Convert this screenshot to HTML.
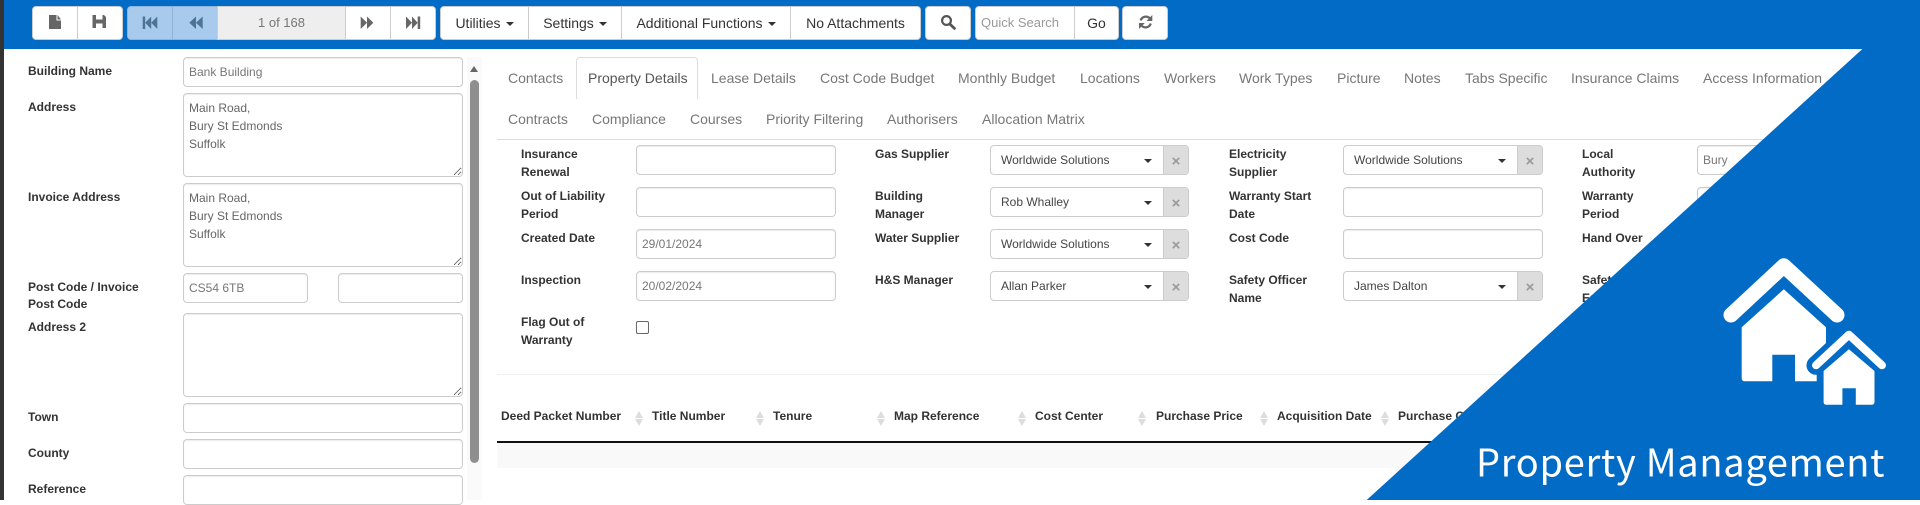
<!DOCTYPE html>
<html lang="en"><head><meta charset="utf-8"><title>Property Management</title>
<style>
html,body{margin:0;padding:0;width:1920px;height:500px;overflow:hidden;background:#fff;font-family:"Liberation Sans",Arial,sans-serif;font-size:12px;color:#333}
*{box-sizing:border-box}
.a,.l,.t,.i,.s,.h,.b,textarea{position:absolute}
.l{left:0;font-weight:bold;line-height:18px;white-space:nowrap;color:#333}
.t{font-size:14px;line-height:20px;color:#777;white-space:nowrap}
.i,textarea{background:#fff;border:1px solid #ccc;border-radius:4px;box-shadow:inset 0 1px 1px rgba(0,0,0,.075);padding:0 5px;color:#777;font:12px/28px "Liberation Sans",Arial,sans-serif}
textarea{padding:5px;line-height:18px;color:#666;margin:0;resize:both;overflow:hidden;outline:0}
.s{height:30px;background:#fff;border:1px solid #ccc;border-radius:4px;line-height:28px;color:#444;padding-left:10px;white-space:nowrap;font-size:12px}
.s u{position:absolute;right:0;top:0;bottom:0;width:25px;background:#ddd;border-left:1px solid #ccc;border-radius:0 3px 3px 0}
.s u:after{content:"\00d7";position:absolute;left:0;right:0;top:0;text-align:center;font-weight:bold;font-size:15px;color:#999;text-decoration:none;line-height:31px}
.s i{position:absolute;right:36px;top:13px;border:4px solid transparent;border-top-color:#333;border-bottom:0}
.b{top:6px;height:34px;background:#fff;border:1px solid #ccc;font-size:14px;line-height:32px;text-align:center;color:#333;white-space:nowrap}
.h{top:407px;font-weight:bold;line-height:18px;white-space:nowrap;color:#333}
.c{display:inline-block;width:0;height:0;border:4px solid transparent;border-top-color:#333;border-bottom:0;vertical-align:middle;margin-left:5px}
</style></head><body>
<div class="a" style="left:0;top:0;width:1920px;height:49px;background:#016bc6"></div>
<div class="a" style="left:0;top:0;width:4px;height:500px;background:#333"></div>

<!-- toolbar -->
<div class="b" style="left:32px;width:46px;border-radius:4px 0 0 4px"></div>
<div class="b" style="left:77px;width:46px;border-radius:0 4px 4px 0"></div>
<div class="b" style="left:127px;width:46px;border-radius:4px 0 0 4px;background:#a8cbed;border-color:#8fb4d8"></div>
<div class="b" style="left:172px;width:46px;background:#a8cbed;border-color:#8fb4d8"></div>
<div class="b" style="left:217px;width:129px;background:#eee;color:#777;font-size:13px">1 of 168</div>
<div class="b" style="left:345px;width:46px"></div>
<div class="b" style="left:390px;width:46px;border-radius:0 4px 4px 0"></div>
<div class="b" style="left:440px;width:89px;border-radius:4px 0 0 4px">Utilities<span class="c"></span></div>
<div class="b" style="left:528px;width:94px">Settings<span class="c"></span></div>
<div class="b" style="left:621px;width:170px">Additional Functions<span class="c"></span></div>
<div class="b" style="left:790px;width:131px;border-radius:0 4px 4px 0">No Attachments</div>
<div class="b" style="left:925px;width:46px;border-radius:4px"></div>
<div class="b" style="left:975px;width:100px;border-radius:4px 0 0 4px;color:#999;font-size:13px;text-align:left;padding-left:5px">Quick Search</div>
<div class="b" style="left:1074px;width:45px;border-radius:0 4px 4px 0">Go</div>
<div class="b" style="left:1122px;width:46px;border-radius:4px"></div>

<!-- left panel -->
<div class="a" style="left:467px;top:57px;width:15px;height:443px;background:#fafafa"></div>
<div class="a" style="left:470px;top:80px;width:9px;height:383px;background:#8f8f8f;border-radius:5px"></div>
<div class="a" style="left:470px;top:66px;border:4.5px solid transparent;border-bottom:6px solid #666;border-top:0"></div>
<div class="l" style="left:28px;top:62px">Building Name</div>
<div class="i" style="left:183px;top:57px;width:280px;height:30px">Bank Building</div>
<div class="l" style="left:28px;top:98px">Address</div>
<textarea style="left:183px;top:93px;width:280px;height:84px">Main Road,
Bury St Edmonds
Suffolk</textarea>
<div class="l" style="left:28px;top:188px">Invoice Address</div>
<textarea style="left:183px;top:183px;width:280px;height:84px">Main Road,
Bury St Edmonds
Suffolk</textarea>
<div class="l" style="left:28px;top:279px;line-height:17px">Post Code / Invoice<br>Post Code</div>
<div class="i" style="left:183px;top:273px;width:125px;height:30px">CS54 6TB</div>
<div class="i" style="left:338px;top:273px;width:125px;height:30px"></div>
<div class="l" style="left:28px;top:318px">Address 2</div>
<textarea style="left:183px;top:313px;width:280px;height:84px"></textarea>
<div class="l" style="left:28px;top:408px">Town</div>
<div class="i" style="left:183px;top:403px;width:280px;height:30px"></div>
<div class="l" style="left:28px;top:444px">County</div>
<div class="i" style="left:183px;top:439px;width:280px;height:30px"></div>
<div class="l" style="left:28px;top:480px">Reference</div>
<div class="i" style="left:183px;top:475px;width:280px;height:30px"></div>

<!-- tabs -->
<div class="a" style="left:576px;top:57px;width:122px;height:42px;border:1px solid #ddd;border-bottom:0;border-radius:4px 4px 0 0;background:#fff"></div>
<div class="t" style="left:508px;top:68px">Contacts</div>
<div class="t" style="left:588px;top:68px;color:#555">Property Details</div>
<div class="t" style="left:711px;top:68px">Lease Details</div>
<div class="t" style="left:820px;top:68px">Cost Code Budget</div>
<div class="t" style="left:958px;top:68px">Monthly Budget</div>
<div class="t" style="left:1080px;top:68px">Locations</div>
<div class="t" style="left:1164px;top:68px">Workers</div>
<div class="t" style="left:1239px;top:68px">Work Types</div>
<div class="t" style="left:1337px;top:68px">Picture</div>
<div class="t" style="left:1404px;top:68px">Notes</div>
<div class="t" style="left:1465px;top:68px">Tabs Specific</div>
<div class="t" style="left:1571px;top:68px">Insurance Claims</div>
<div class="t" style="left:1703px;top:68px">Access Information</div>
<div class="t" style="left:508px;top:109px">Contracts</div>
<div class="t" style="left:592px;top:109px">Compliance</div>
<div class="t" style="left:690px;top:109px">Courses</div>
<div class="t" style="left:766px;top:109px">Priority Filtering</div>
<div class="t" style="left:887px;top:109px">Authorisers</div>
<div class="t" style="left:982px;top:109px">Allocation Matrix</div>
<div class="a" style="left:497px;top:139px;width:1423px;height:1px;background:#ddd"></div>

<!-- form col 1 -->
<div class="l" style="left:521px;top:145px">Insurance<br>Renewal</div>
<div class="i" style="left:636px;top:145px;width:200px;height:30px"></div>
<div class="l" style="left:521px;top:187px">Out of Liability<br>Period</div>
<div class="i" style="left:636px;top:187px;width:200px;height:30px"></div>
<div class="l" style="left:521px;top:229px">Created Date</div>
<div class="i" style="left:636px;top:229px;width:200px;height:30px">29/01/2024</div>
<div class="l" style="left:521px;top:271px">Inspection</div>
<div class="i" style="left:636px;top:271px;width:200px;height:30px">20/02/2024</div>
<div class="l" style="left:521px;top:313px">Flag Out of<br>Warranty</div>
<div class="a" style="left:636px;top:321px;width:13px;height:13px;border:1px solid #666;border-radius:2px;background:#fff"></div>

<!-- form col 2 -->
<div class="l" style="left:875px;top:145px">Gas Supplier</div>
<div class="s" style="left:990px;top:145px;width:199px">Worldwide Solutions<i></i><u></u></div>
<div class="l" style="left:875px;top:187px">Building<br>Manager</div>
<div class="s" style="left:990px;top:187px;width:199px">Rob Whalley<i></i><u></u></div>
<div class="l" style="left:875px;top:229px">Water Supplier</div>
<div class="s" style="left:990px;top:229px;width:199px">Worldwide Solutions<i></i><u></u></div>
<div class="l" style="left:875px;top:271px">H&amp;S Manager</div>
<div class="s" style="left:990px;top:271px;width:199px">Allan Parker<i></i><u></u></div>

<!-- form col 3 -->
<div class="l" style="left:1229px;top:145px">Electricity<br>Supplier</div>
<div class="s" style="left:1343px;top:145px;width:200px">Worldwide Solutions<i></i><u></u></div>
<div class="l" style="left:1229px;top:187px">Warranty Start<br>Date</div>
<div class="i" style="left:1343px;top:187px;width:200px;height:30px"></div>
<div class="l" style="left:1229px;top:229px">Cost Code</div>
<div class="i" style="left:1343px;top:229px;width:200px;height:30px"></div>
<div class="l" style="left:1229px;top:271px">Safety Officer<br>Name</div>
<div class="s" style="left:1343px;top:271px;width:200px">James Dalton<i></i><u></u></div>

<!-- form col 4 -->
<div class="l" style="left:1582px;top:145px">Local<br>Authority</div>
<div class="i" style="left:1697px;top:145px;width:200px;height:30px">Bury</div>
<div class="l" style="left:1582px;top:187px">Warranty<br>Period</div>
<div class="i" style="left:1697px;top:187px;width:200px;height:30px"></div>
<div class="l" style="left:1582px;top:229px">Hand Over</div>
<div class="l" style="left:1582px;top:271px">Safety Officer<br>Email</div>

<div class="a" style="left:497px;top:374px;width:1423px;height:1px;background:#eee"></div>

<!-- table -->
<div class="h" style="left:501px">Deed Packet Number</div>
<div class="h" style="left:652px">Title Number</div>
<div class="h" style="left:773px">Tenure</div>
<div class="h" style="left:894px">Map Reference</div>
<div class="h" style="left:1035px">Cost Center</div>
<div class="h" style="left:1156px">Purchase Price</div>
<div class="h" style="left:1277px">Acquisition Date</div>
<div class="h" style="left:1398px">Purchase Cost</div>
<div class="a" style="left:497px;top:441px;width:1423px;height:2px;background:#111"></div>
<div class="a" style="left:497px;top:443px;width:1423px;height:25px;background:#f9f9f9"></div>

<svg class="a" style="left:0;top:0" width="1920" height="500" viewBox="0 0 1920 500">
<g fill="#ddd">
<path d="M639 411l4 7h-8zM639 426l4-7h-8z"/>
<path d="M760 411l4 7h-8zM760 426l4-7h-8z"/>
<path d="M881 411l4 7h-8zM881 426l4-7h-8z"/>
<path d="M1022 411l4 7h-8zM1022 426l4-7h-8z"/>
<path d="M1142 411l4 7h-8zM1142 426l4-7h-8z"/>
<path d="M1264 411l4 7h-8zM1264 426l4-7h-8z"/>
<path d="M1385 411l4 7h-8zM1385 426l4-7h-8z"/>
</g>
<!-- toolbar icons -->
<g fill="#666">
<path d="M49 15H56.5V20.5H61V29H49Z"/><path d="M57.5 15L61 19.5H57.5Z"/>
<path fill-rule="evenodd" d="M92.5 15H104L106 17V28H92.5ZM96 15V19.5H102.5V15ZM96 23.5V28H102.5V23.5Z"/>
<path d="M360.7 16.5L367 22.7L360.7 29ZM367 16.5L373.3 22.7L367 29Z"/>
<path d="M406 16.5L412 22.7L406 29ZM412 16.5L417.7 22.7L412 29ZM417.7 16.5H420.2V29H417.7Z"/>
</g>
<g fill="#4f7396">
<path d="M142.7 16.5H145.2V29H142.7ZM145.2 22.7L151.2 16.5V29ZM151.2 22.7L157.3 16.5V29Z"/>
<path d="M189.3 22.7L196 16.5V29ZM196 22.7L202.7 16.5V29Z"/>
</g>
<circle cx="946.5" cy="20.5" r="4.4" fill="none" stroke="#555" stroke-width="2.2"/>
<path d="M949.8 24L954.4 28.4" stroke="#555" stroke-width="2.8" stroke-linecap="round"/>
<path d="M1140.6 20.5A5.5 5.5 0 0 1 1150 18.5M1150.8 23.5A5.5 5.5 0 0 1 1141.4 25.5" fill="none" stroke="#666" stroke-width="2.2"/>
<path d="M1152.3 15V21H1146.5ZM1139 29V23H1144.8Z" fill="#666"/>
<!-- corner banner -->
<polygon points="1862.4,49 1920,49 1920,500 1366.7,500" fill="#016bc6"/>
<path d="M1731 315L1783.8 265.8L1837 315" fill="none" stroke="#fff" stroke-width="15" stroke-linecap="round" stroke-linejoin="round"/>
<path d="M1783.8 289.3L1741.7 327.3V378.3Q1741.7 381.3 1744.7 381.3H1772.3V354.7H1795V381.3H1826V327.3Z" fill="#fff"/>
<path d="M1816 365.3L1848.9 334.7L1882 365.3" fill="none" stroke="#016bc6" stroke-width="19" stroke-linecap="round" stroke-linejoin="round"/>
<rect x="1816.7" y="364" width="20" height="20" fill="#016bc6"/>
<path d="M1816 365.3L1848.9 334.7L1882 365.3" fill="none" stroke="#fff" stroke-width="8" stroke-linecap="round" stroke-linejoin="round"/>
<path d="M1848.9 349.3L1823.6 371V402Q1823.6 404.7 1826.3 404.7H1842.4V388.3H1855.8V404.7H1871.8Q1874.5 404.7 1874.5 402V371Z" fill="#fff"/>
<text x="1476" y="476.7" fill="#fff" font-size="38" textLength="408.5" lengthAdjust="spacing" font-family="'Noto Sans CJK SC','Liberation Sans',sans-serif">Property Management</text>
</svg>
</body></html>
